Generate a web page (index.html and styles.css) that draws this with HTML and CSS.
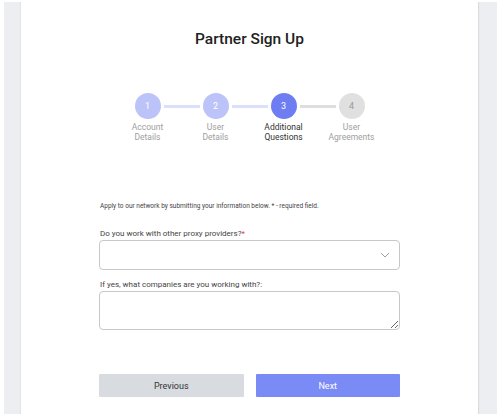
FILE: index.html
```html
<!DOCTYPE html>
<html>
<head>
<meta charset="utf-8">
<link rel="stylesheet" href="styles.css">
</head>
<body>
<div class="panel">
  <div class="card">
    <h1 class="title">Partner Sign Up</h1>
    <div class="steps">
      <div class="step done">
        <div class="circle">1</div>
        <div class="label">Account<br>Details</div>
      </div>
      <div class="step done">
        <div class="circle">2</div>
        <div class="label">User<br>Details</div>
      </div>
      <div class="step active">
        <div class="circle">3</div>
        <div class="label">Additional<br>Questions</div>
      </div>
      <div class="step todo">
        <div class="circle">4</div>
        <div class="label">User<br>Agreements</div>
      </div>
    </div>
    <form class="form">
      <p class="intro">Apply to our network by submitting your information below. * - required field.</p>
      <label class="field-label">Do you work with other proxy providers?<span class="req">*</span></label>
      <div class="select">
        <svg width="10" height="6" viewBox="0 0 10 6"><path d="M1 1 L5 5 L9 1" fill="none" stroke="#a0a0a0" stroke-width="1"/></svg>
      </div>
      <label class="field-label second">If yes, what companies are you working with?:</label>
      <textarea class="textarea"></textarea>
      <div class="buttons">
        <button type="button" class="btn prev">Previous</button>
        <button type="button" class="btn next">Next</button>
      </div>
    </form>
  </div>
</div>
</body>
</html>
```
FILE: styles.css
```css
* { box-sizing: border-box; }
html, body { margin: 0; padding: 0; background: #fff; }
body { font-family: Roboto, "Noto Sans", sans-serif; color: #333; }

.panel {
  margin: 2px 5px 0 4px;
  padding: 0 19px 0 17px;
  background: #eceef1;
  height: 412px;
  overflow: hidden;
}
.card {
  background: #fff;
  height: 100%;
  box-shadow: 1px 0 1px rgba(0,0,0,0.08), -1px 0 1px rgba(0,0,0,0.04);
  padding: 29px 78px 0 78px;
  display: flex;
  flex-direction: column;
}
.title {
  margin: 0;
  text-align: center;
  font-size: 15.5px;
  font-weight: 500;
  color: #222;
  line-height: 16px;
}
.steps {
  margin-top: 46px;
  display: flex;
  justify-content: center;
}
.step {
  width: 68px;
  display: flex;
  flex-direction: column;
  align-items: center;
  position: relative;
}
.step + .step::before {
  content: "";
  position: absolute;
  top: 12px;
  left: -18px;
  width: 36px;
  height: 3px;
  background: #dcdff9;
}
.step.todo::before { background: #dedede; }
.circle {
  width: 26px;
  height: 26px;
  border-radius: 50%;
  display: flex;
  align-items: center;
  justify-content: center;
  font-size: 9px;
  color: #fff;
  background: #bcc3f8;
}
.step.active .circle { background: #6e7ef2; }
.step.todo .circle { background: #e0e0e0; color: #999; }
.label {
  margin-top: 3px;
  text-align: center;
  font-size: 8.5px;
  line-height: 10px;
  color: #a0a0a0;
}
.step.active .label { color: #333; }

.form {
  margin-top: 60px;
  display: flex;
  flex-direction: column;
}
.intro {
  margin: 0 0 0 1px;
  font-size: 6.5px;
  line-height: 8px;
  color: #444;
}
.field-label {
  display: block;
  margin: 19px 0 0 1px;
  font-size: 8px;
  line-height: 10px;
  color: #444;
}
.field-label.second { margin-top: 10px; }
.req { color: #e53935; }
.select {
  margin-top: 1px;
  height: 30px;
  border: 1px solid #c8c8c8;
  border-radius: 4px;
  display: flex;
  align-items: center;
  justify-content: flex-end;
  padding-right: 9px;
}
.textarea {
  margin-top: 1px;
  height: 39px;
  border: 1px solid #c8c8c8;
  border-radius: 4px;
  resize: vertical;
  font-family: inherit;
}
.buttons {
  margin-top: 44px;
  display: flex;
  gap: 12px;
}
.btn {
  flex: 1;
  height: 23px;
  border: none;
  border-radius: 1px;
  font-family: Roboto, sans-serif;
  font-size: 9px;
  padding: 0;
}
.btn.prev { background: #d8dce1; color: #333; }
.btn.next { background: #7a8bf6; color: #fff; }
```
